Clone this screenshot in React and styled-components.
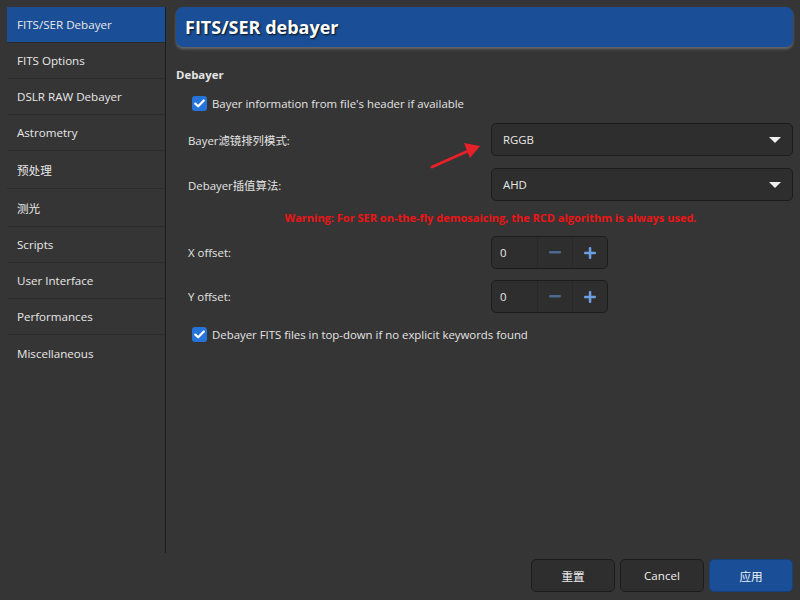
import React from "react";
import styled, { createGlobalStyle } from "styled-components";

const Global = createGlobalStyle`
  html, body { margin: 0; padding: 0; background: #353535; }
  body { font-family: "Open Sans", "Noto Sans CJK SC", sans-serif; font-size: 11.4px; color: #e4e4e4; }
  * { box-sizing: border-box; }
`;

const Page = styled.div`
  width: 800px;
  height: 600px;
  padding: 7px 7px 8px 7px;
  display: flex;
  flex-direction: column;
  background: #353535;
  overflow: hidden;
`;

const Body = styled.div`
  flex: 1;
  display: flex;
  min-height: 0;
`;

const Sidebar = styled.nav`
  width: 159px;
  border-right: 1px solid #1c1c1c;
  display: flex;
  flex-direction: column;
`;

const NavItem = styled.div`
  height: ${(p) => (p.$tall ? 38 : 36)}px;
  padding-left: 10px;
  display: flex;
  align-items: center;
  border-bottom: ${(p) => (p.$last ? "none" : "1px solid #2c2c2c")};
  background: ${(p) => (p.$active ? "#1a4f97" : "transparent")};
  color: #e8e8e8;
  font-size: 11.6px;
`;

const Main = styled.main`
  flex: 1;
  padding-left: 10px;
  display: flex;
  flex-direction: column;
  position: relative;
`;

const Header = styled.div`
  height: 40px;
  border-radius: 7px;
  background: #1a4f97;
  box-shadow: 0 2px 3px rgba(150, 150, 150, 0.55);
  display: flex;
  align-items: center;
  padding-left: 9px;
  font-size: 18px;
  font-weight: 700;
  color: #ffffff;
  text-shadow: 1px 1px 2px rgba(0, 0, 0, 0.85);
`;

const SectionTitle = styled.div`
  margin-top: 20px;
  height: 16px;
  line-height: 16px;
  font-weight: 700;
  color: #e4e4e4;
`;

const CheckRow = styled.label`
  margin-top: ${(p) => p.$mt}px;
  margin-left: 16px;
  height: 16px;
  display: flex;
  align-items: center;
  gap: 5px;
  color: #e4e4e4;
`;

const CheckBox = styled.span`
  width: 15px;
  height: 15px;
  border-radius: 3px;
  background: #2673d9;
  display: flex;
  align-items: center;
  justify-content: center;
`;

const FormRow = styled.div`
  margin-top: ${(p) => p.$mt}px;
  display: grid;
  grid-template-columns: 303px 1fr;
  align-items: center;
  padding-left: 12px;
`;

const Label = styled.span`
  color: #e4e4e4;
`;

const Combo = styled.div`
  height: 33px;
  border: 1px solid #1c1c1c;
  border-radius: 5px;
  background: #2e2e2e;
  display: flex;
  align-items: center;
  justify-content: space-between;
  padding: 0 11px 0 11px;
  color: #e8e8e8;
`;

const Arrow = styled.span`
  width: 0;
  height: 0;
  border-left: 6px solid transparent;
  border-right: 6px solid transparent;
  border-top: 6px solid #f0f0f0;
`;

const Warning = styled.div`
  margin-top: 9px;
  height: 16px;
  line-height: 16px;
  text-align: center;
  padding-left: 12px;
  color: #ee1416;
  font-weight: 700;
  font-size: 11px;
`;

const Spin = styled.div`
  width: 117px;
  height: 33px;
  border: 1px solid #1c1c1c;
  border-radius: 5px;
  background: #2e2e2e;
  display: grid;
  grid-template-columns: 46px 35px 1fr;
  overflow: hidden;
`;

const SpinValue = styled.div`
  display: flex;
  align-items: center;
  padding-left: 8px;
  color: #e8e8e8;
  border-right: 1px solid #282828;
`;

const SpinBtn = styled.div`
  display: flex;
  align-items: center;
  justify-content: center;
  border-right: ${(p) => (p.$sep ? "1px solid #282828" : "none")};
`;

const Footer = styled.div`
  margin-top: 6px;
  height: 33px;
  display: flex;
  justify-content: flex-end;
  gap: 5px;
`;

const Button = styled.button`
  width: 84px;
  height: 33px;
  border-radius: 5px;
  border: 1px solid ${(p) => (p.$primary ? "#16407a" : "#1c1c1c")};
  background: ${(p) => (p.$primary ? "#1a4f97" : "#2e2e2e")};
  color: #f0f0f0;
  font-family: "Open Sans", "Noto Sans CJK SC", sans-serif;
  font-size: 11.6px;
  padding: 0;
`;

const Annotation = styled.svg`
  position: absolute;
  left: 264px;
  top: 127px;
  overflow: visible;
`;

const Check = () => (
  <svg width="11" height="9" viewBox="0 0 11 9">
    <path d="M1.3 4.6 L4.2 7.3 L9.8 1.5" fill="none" stroke="#fff" strokeWidth="2.2" strokeLinecap="round" strokeLinejoin="round" />
  </svg>
);

const Minus = () => (
  <svg width="12" height="3" viewBox="0 0 12 3">
    <rect x="0" y="0" width="12" height="2.5" rx="1" fill="#4b6890" />
  </svg>
);

const Plus = () => (
  <svg width="12" height="12" viewBox="0 0 12 12">
    <rect x="0" y="4.8" width="12" height="2.5" rx="1" fill="#6d9fe0" />
    <rect x="4.8" y="0" width="2.5" height="12" rx="1" fill="#6d9fe0" />
  </svg>
);

const nav = [
  { t: "FITS/SER Debayer", active: true },
  { t: "FITS Options" },
  { t: "DSLR RAW Debayer" },
  { t: "Astrometry" },
  { t: "预处理", tall: true },
  { t: "测光", tall: true },
  { t: "Scripts" },
  { t: "User Interface" },
  { t: "Performances" },
  { t: "Miscellaneous", last: true },
];

export default function App() {
  return (
    <>
      <Global />
      <Page>
        <Body>
          <Sidebar>
            {nav.map((n) => (
              <NavItem key={n.t} $active={n.active} $tall={n.tall} $last={n.last}>
                {n.t}
              </NavItem>
            ))}
          </Sidebar>
          <Main>
            <Header>FITS/SER debayer</Header>
            <SectionTitle>Debayer</SectionTitle>
            <CheckRow $mt={12}>
              <CheckBox><Check /></CheckBox>
              Bayer information from file's header if available
            </CheckRow>
            <FormRow $mt={12}>
              <Label>Bayer滤镜排列模式:</Label>
              <Combo>RGGB<Arrow /></Combo>
            </FormRow>
            <FormRow $mt={12}>
              <Label>Debayer插值算法:</Label>
              <Combo>AHD<Arrow /></Combo>
            </FormRow>
            <Warning>Warning: For SER on-the-fly demosaicing, the RCD algorithm is always used.</Warning>
            <FormRow $mt={10}>
              <Label>X offset:</Label>
              <Spin>
                <SpinValue>0</SpinValue>
                <SpinBtn $sep><Minus /></SpinBtn>
                <SpinBtn><Plus /></SpinBtn>
              </Spin>
            </FormRow>
            <FormRow $mt={11}>
              <Label>Y offset:</Label>
              <Spin>
                <SpinValue>0</SpinValue>
                <SpinBtn $sep><Minus /></SpinBtn>
                <SpinBtn><Plus /></SpinBtn>
              </Spin>
            </FormRow>
            <CheckRow $mt={13}>
              <CheckBox><Check /></CheckBox>
              Debayer FITS files in top-down if no explicit keywords found
            </CheckRow>
            <Annotation width="60" height="40" viewBox="0 0 60 40">
              <line x1="2" y1="33" x2="38" y2="17" stroke="#e8202a" strokeWidth="3" strokeLinecap="round" />
              <polygon points="50,12 34,9 40,24" fill="#e8202a" />
            </Annotation>
          </Main>
        </Body>
        <Footer>
          <Button>重置</Button>
          <Button>Cancel</Button>
          <Button $primary>应用</Button>
        </Footer>
      </Page>
    </>
  );
}
